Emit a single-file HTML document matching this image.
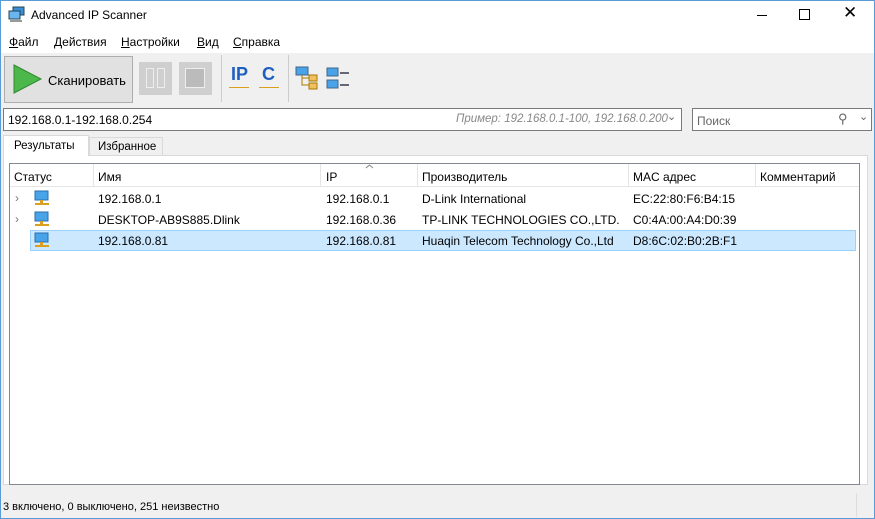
<!DOCTYPE html>
<html><head><meta charset="utf-8"><style>
*{box-sizing:border-box;margin:0;padding:0}
body{width:875px;height:519px;overflow:hidden;background:#f0f0f0;font-family:"Liberation Sans",sans-serif;font-size:12px;color:#000;position:relative}
.a{position:absolute;white-space:nowrap}
.win{position:absolute;left:0;top:0;width:875px;height:519px;border:1px solid #5a9bd5;}
</style></head><body>
<div class="a" style="left:0;top:0;width:875px;height:53px;background:#fff"></div>
<svg class="a" style="left:8px;top:6px" width="18" height="18"><rect x="5" y="1" width="11" height="8" fill="#3a8fd8" stroke="#245"/><rect x="1" y="5" width="11" height="8" fill="#6bb6ee" stroke="#245"/><rect x="2" y="14" width="12" height="2" fill="#999"/></svg>
<div class="a" style="left:31px;top:8px;font-size:12px">Advanced IP Scanner</div>
<div class="a" style="left:757px;top:15px;width:10px;height:1px;background:#000"></div>
<div class="a" style="left:799px;top:9px;width:11px;height:11px;border:1px solid #000"></div>
<div class="a" style="left:843px;top:3px;font-size:17px">&#10005;</div>
<div class="a" style="left:9px;top:35px"><u>Ф</u>айл</div>
<div class="a" style="left:54px;top:35px"><u>Д</u>ействия</div>
<div class="a" style="left:121px;top:35px"><u>Н</u>астройки</div>
<div class="a" style="left:197px;top:35px"><u>В</u>ид</div>
<div class="a" style="left:233px;top:35px"><u>С</u>правка</div>
<div class="a" style="left:4px;top:56px;width:129px;height:47px;background:#e1e1e1;border:1px solid #adadad"></div>
<svg class="a" style="left:13px;top:64px" width="30" height="30"><polygon points="1,1 28,15 1,29" fill="#4cb84c" stroke="#2e8b2e"/></svg>
<div class="a" style="left:48px;top:73px;font-size:13px">Сканировать</div>
<div class="a" style="left:139px;top:62px;width:33px;height:33px;background:#cfcfcf"></div>
<div class="a" style="left:146px;top:68px;width:8px;height:20px;border:1px solid #eee"></div>
<div class="a" style="left:157px;top:68px;width:8px;height:20px;border:1px solid #eee"></div>
<div class="a" style="left:179px;top:62px;width:33px;height:33px;background:#cfcfcf"></div>
<div class="a" style="left:185px;top:68px;width:20px;height:20px;border:1px solid #eee;background:#bbb"></div>
<div class="a" style="left:221px;top:55px;width:1px;height:47px;background:#ccc"></div>
<div class="a" style="left:231px;top:64px;font-size:18px;font-weight:bold;color:#1f5fbf">IP</div>
<div class="a" style="left:229px;top:87px;width:20px;height:1px;background:#d9a020"></div>
<div class="a" style="left:262px;top:64px;font-size:18px;font-weight:bold;color:#1f5fbf">C</div>
<div class="a" style="left:259px;top:87px;width:20px;height:1px;background:#d9a020"></div>
<div class="a" style="left:288px;top:55px;width:1px;height:47px;background:#ccc"></div>
<svg class="a" style="left:295px;top:66px" width="56" height="26"><rect x="1" y="1" width="12" height="8" fill="#49a3e8" stroke="#468"/><rect x="14" y="9" width="8" height="6" fill="#f0c060" stroke="#a70"/><rect x="14" y="17" width="8" height="6" fill="#f0c060" stroke="#a70"/><path d="M7 9v10h7M7 12h7" stroke="#a70" fill="none"/><rect x="32" y="2" width="11" height="8" fill="#49a3e8" stroke="#468"/><rect x="32" y="14" width="11" height="8" fill="#49a3e8" stroke="#468"/><rect x="45" y="6" width="9" height="2" fill="#667"/><rect x="45" y="18" width="9" height="2" fill="#667"/></svg>
<div class="a" style="left:3px;top:108px;width:679px;height:23px;background:#fff;border:1px solid #7a7a7a"></div>
<div class="a" style="left:8px;top:113px">192.168.0.1-192.168.0.254</div>
<div class="a" style="left:456px;top:113px;color:#888;font-style:italic;font-size:11.5px">Пример: 192.168.0.1-100, 192.168.0.200</div>
<div class="a" style="left:667px;top:110px;color:#666;font-size:11px">&#8964;</div>
<div class="a" style="left:692px;top:108px;width:180px;height:23px;background:#fff;border:1px solid #7a7a7a"></div>
<div class="a" style="left:697px;top:114px;color:#666">Поиск</div>
<div class="a" style="left:838px;top:111px;color:#666;font-size:13px">&#9906;</div>
<div class="a" style="left:859px;top:110px;color:#666;font-size:11px">&#8964;</div>
<div class="a" style="left:3px;top:155px;width:865px;height:330px;border:1px solid #d9d9d9;background:#fff"></div>
<div class="a" style="left:3px;top:135px;width:86px;height:21px;background:#fff;border:1px solid #d9d9d9;border-bottom:none"></div>
<div class="a" style="left:14px;top:140px;font-size:11.5px">Результаты</div>
<div class="a" style="left:89px;top:137px;width:74px;height:18px;background:#f0f0f0;border:1px solid #d9d9d9;border-bottom:none"></div>
<div class="a" style="left:98px;top:141px;font-size:11.5px">Избранное</div>
<div class="a" style="left:9px;top:163px;width:851px;height:322px;border:1px solid #828790;background:#fff"></div>
<div class="a" style="left:10px;top:164px;width:849px;height:23px;border-bottom:1px solid #e5e5e5"></div>
<div class="a" style="left:93px;top:164px;width:1px;height:23px;background:#e5e5e5"></div>
<div class="a" style="left:320px;top:164px;width:1px;height:23px;background:#e5e5e5"></div>
<div class="a" style="left:417px;top:164px;width:1px;height:23px;background:#e5e5e5"></div>
<div class="a" style="left:628px;top:164px;width:1px;height:23px;background:#e5e5e5"></div>
<div class="a" style="left:755px;top:164px;width:1px;height:23px;background:#e5e5e5"></div>
<svg class="a" style="left:365px;top:164px" width="9" height="5"><path d="M1 4L4.5 1L8 4" stroke="#888" fill="none"/></svg>
<div class="a" style="left:14px;top:170px">Статус</div>
<div class="a" style="left:98px;top:170px">Имя</div>
<div class="a" style="left:326px;top:170px">IP</div>
<div class="a" style="left:422px;top:170px">Производитель</div>
<div class="a" style="left:633px;top:170px">MAC адрес</div>
<div class="a" style="left:760px;top:170px">Комментарий</div>
<div class="a" style="left:30px;top:230px;width:826px;height:21px;background:#cce8ff;border:1px solid #99d1ff"></div>
<div class="a" style="left:15px;top:191px;color:#777">&#8250;</div>
<div class="a" style="left:15px;top:212px;color:#777">&#8250;</div>
<svg class="a" style="left:34px;top:190px" width="16" height="16"><rect x="1" y="1" width="13" height="9" fill="#49a3e8" stroke="#2a6fb0"/><rect x="6" y="10" width="3" height="3" fill="#d9a020"/><rect x="1" y="13" width="14" height="2" fill="#d9a020"/></svg>
<svg class="a" style="left:34px;top:211px" width="16" height="16"><rect x="1" y="1" width="13" height="9" fill="#49a3e8" stroke="#2a6fb0"/><rect x="6" y="10" width="3" height="3" fill="#d9a020"/><rect x="1" y="13" width="14" height="2" fill="#d9a020"/></svg>
<svg class="a" style="left:34px;top:232px" width="16" height="16"><rect x="1" y="1" width="13" height="9" fill="#49a3e8" stroke="#2a6fb0"/><rect x="6" y="10" width="3" height="3" fill="#d9a020"/><rect x="1" y="13" width="14" height="2" fill="#d9a020"/></svg>
<div class="a" style="left:98px;top:192px">192.168.0.1</div><div class="a" style="left:326px;top:192px">192.168.0.1</div><div class="a" style="left:422px;top:192px">D-Link International</div><div class="a" style="left:633px;top:192px">EC:22:80:F6:B4:15</div>
<div class="a" style="left:98px;top:213px">DESKTOP-AB9S885.Dlink</div><div class="a" style="left:326px;top:213px">192.168.0.36</div><div class="a" style="left:422px;top:213px">TP-LINK TECHNOLOGIES CO.,LTD.</div><div class="a" style="left:633px;top:213px">C0:4A:00:A4:D0:39</div>
<div class="a" style="left:98px;top:234px">192.168.0.81</div><div class="a" style="left:326px;top:234px">192.168.0.81</div><div class="a" style="left:422px;top:234px">Huaqin Telecom Technology Co.,Ltd</div><div class="a" style="left:633px;top:234px">D8:6C:02:B0:2B:F1</div>
<div class="a" style="left:3px;top:501px;font-size:11px">3 включено, 0 выключено, 251 неизвестно</div>
<div class="a" style="left:856px;top:493px;width:1px;height:24px;background:#ddd"></div>
<div class="win"></div>
</body></html>
